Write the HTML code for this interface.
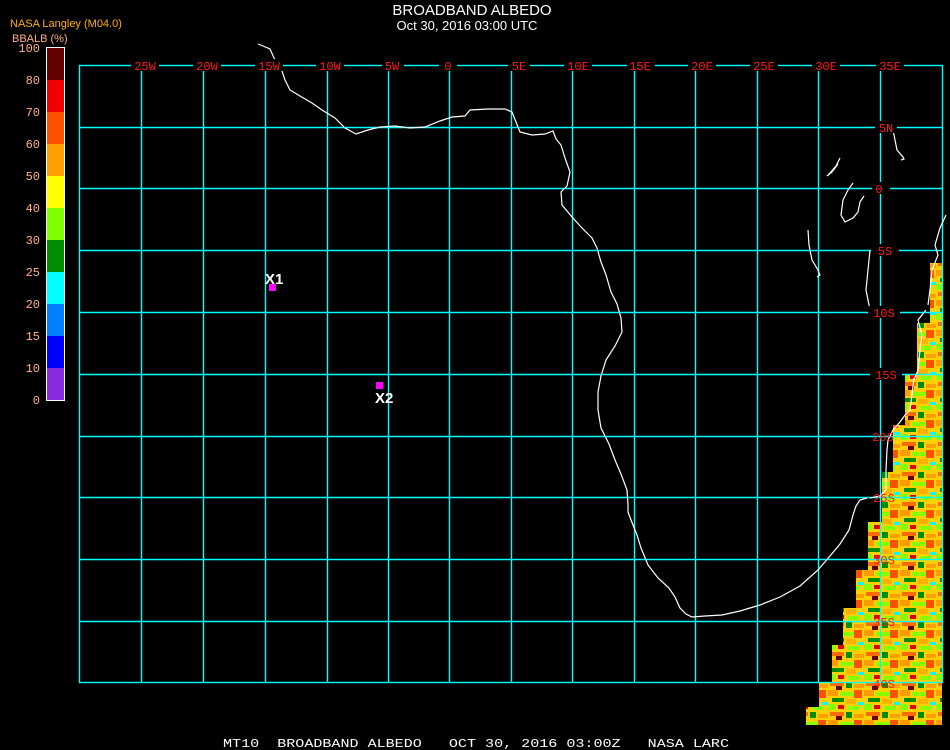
<!DOCTYPE html>
<html><head><meta charset="utf-8"><style>
html,body{margin:0;padding:0;background:#000;width:950px;height:750px;overflow:hidden}
svg{display:block}
text{font-family:"Liberation Mono",monospace}
</style></head><body>
<svg width="950" height="750" viewBox="0 0 950 750" xmlns="http://www.w3.org/2000/svg">
<defs>
<pattern id="dat" width="36" height="30" patternUnits="userSpaceOnUse">
<rect width="36" height="30" fill="#ffd000"/>
<rect x="0" y="0" width="10" height="6" fill="#ff9a00"/>
<rect x="12" y="2" width="14" height="4" fill="#88ff00"/>
<rect x="26" y="0" width="8" height="8" fill="#ff5000"/>
<rect x="4" y="8" width="12" height="4" fill="#008c00"/>
<rect x="18" y="9" width="10" height="5" fill="#ffb000"/>
<rect x="0" y="14" width="8" height="6" fill="#88ff00"/>
<rect x="10" y="15" width="6" height="4" fill="#e00000"/>
<rect x="20" y="16" width="12" height="4" fill="#88ff00"/>
<rect x="30" y="12" width="6" height="3" fill="#00ffff"/>
<rect x="2" y="22" width="14" height="4" fill="#ff6a00"/>
<rect x="18" y="22" width="6" height="6" fill="#008c00"/>
<rect x="26" y="24" width="10" height="4" fill="#ffa000"/>
<rect x="8" y="26" width="6" height="4" fill="#660000"/>
</pattern>
</defs>

<!-- data swath -->
<polygon shape-rendering="crispEdges" points="933,263 942,263 942,725 806,725 806,707 819,707 819,683 832,683 832,645 843,645 843,608 856,608 856,570 868,570 868,522 882,522 882,472 893,472 893,425 905,425 905,375 917,375 917,323 930,323 930,263" fill="url(#dat)"/>

<!-- grid -->
<g stroke="#00ffff" stroke-width="1.4" fill="none">
<rect x="79.5" y="65.5" width="863" height="617"/>
<path d="M141.5 65V682M203.5 65V682M265.5 65V682M327.5 65V682M388.5 65V682M449.5 65V682M511.5 65V682M572.5 65V682M634.5 65V682M695.5 65V682M757.5 65V682M818.5 65V682M880.5 65V682"/>
<path d="M79 127.5H942M79 188.5H942M79 250.5H942M79 312.5H942M79 374.5H942M79 436.5H942M79 497.5H942M79 559.5H942M79 621.5H942"/>
</g>

<!-- coastline -->
<g stroke="#fff" stroke-width="1.2" fill="none">
<polyline points="258,44 263,46 270,49 274,58 281,68 285,80 290,90 300,96 312,103 322,110 335,118 345,128 356,134 368,130 380,127 395,126 410,128 425,127 440,121 452,117 465,116 470,110 488,109 505,109 512,112 516,122 520,132 532,135 545,134 553,131 556,139 561,145 565,158 570,172 567,186 561,192 562,205 572,217 582,228 592,238 597,248 601,262 606,275 611,292 617,304 621,318 622,332 615,346 606,360 601,376 598,392 598,410 601,428 609,444 615,460 621,474 627,490 628,505 628,512 631,520 637,535 641,548 648,565 658,578 669,588 675,597 680,608 686,614 692,617 705,616 722,615 740,611 760,605 780,597 800,586 818,570 830,556 840,544 849,530 853,515 856,506 860,500 867,498"/>
<polyline points="870,498 880,496 886,490 886,470 887,450 888,440 893,430 900,422 905,415 910,410 912,395 914,378"/>
<polyline points="946,215 940,228 935,245 938,255 932,270 930,290 928,305"/>
<polyline points="914,380 918,370 920,350 922,335 918,320 926,310"/>
<polyline points="893,130 895,140 897,150 903,157 904,159 901,160"/>
<polyline points="840,158 836,166 829,174 827,176 832,172 838,164"/>
<polyline points="853,183 848,190 843,200 841,215 845,222 853,218 858,212 860,202 864,196"/>
<polyline points="808,230 809,245 812,260 818,270 820,275 817,277"/>
<polyline points="870,250 868,270 866,290 868,300 870,310"/>
</g>

<!-- top labels -->
<g font-size="12" fill="#ff1a1a" text-anchor="middle">
<rect x="131" y="59" width="28" height="12" fill="#000"/><text x="145" y="70">25W</text>
<rect x="193" y="59" width="28" height="12" fill="#000"/><text x="207" y="70">20W</text>
<rect x="255" y="59" width="28" height="12" fill="#000"/><text x="269" y="70">15W</text>
<rect x="316" y="59" width="28" height="12" fill="#000"/><text x="330" y="70">10W</text>
<rect x="382" y="59" width="22" height="12" fill="#000"/><text x="392" y="70">5W</text>
<rect x="439" y="59" width="18" height="12" fill="#000"/><text x="448" y="70">0</text>
<rect x="508" y="59" width="22" height="12" fill="#000"/><text x="519" y="70">5E</text>
<rect x="564" y="59" width="28" height="12" fill="#000"/><text x="578" y="70">10E</text>
<rect x="627" y="59" width="28" height="12" fill="#000"/><text x="640" y="70">15E</text>
<rect x="688" y="59" width="28" height="12" fill="#000"/><text x="702" y="70">20E</text>
<rect x="750" y="59" width="28" height="12" fill="#000"/><text x="764" y="70">25E</text>
<rect x="812" y="59" width="28" height="12" fill="#000"/><text x="826" y="70">30E</text>
<rect x="876" y="59" width="28" height="12" fill="#000"/><text x="890" y="70">35E</text>
</g>
<g font-size="12" fill="#ff1a1a" text-anchor="middle">
<rect x="875" y="121" width="22" height="12" fill="#000"/><text x="886" y="132">5N</text>
<rect x="872" y="182" width="18" height="12" fill="#000"/><text x="879" y="193">0</text>
<rect x="871" y="244" width="28" height="12" fill="#000"/><text x="885" y="255">5S</text>
<rect x="868" y="306" width="32" height="12" fill="#000"/><text x="884" y="317">10S</text>
<rect x="870" y="368" width="32" height="12" fill="#000"/><text x="886" y="379">15S</text>
<text x="883" y="441">20S</text>
<text x="884" y="502">25S</text>
<text x="884" y="564">30S</text>
<text x="884" y="626">35S</text>
<text x="884" y="688">40S</text>
</g>

<!-- markers -->
<rect x="269" y="284" width="7" height="7" fill="#ff00ff"/>
<text x="265" y="284" font-size="15" font-weight="bold" fill="#fff" style="font-family:'Liberation Sans',sans-serif">X1</text>
<rect x="376" y="382" width="7" height="7" fill="#ff00ff"/>
<text x="375" y="403" font-size="15" font-weight="bold" fill="#fff" style="font-family:'Liberation Sans',sans-serif">X2</text>

<!-- titles -->
<text x="472" y="15" font-size="15" fill="#fff" text-anchor="middle" style="font-family:'Liberation Sans',sans-serif">BROADBAND ALBEDO</text>
<text x="467" y="30" font-size="13" fill="#fff" text-anchor="middle" style="font-family:'Liberation Sans',sans-serif">Oct 30, 2016 03:00 UTC</text>

<!-- legend -->
<text x="10" y="27" font-size="11" fill="#ffb000" style="font-family:'Liberation Sans',sans-serif">NASA Langley (M04.0)</text>
<text x="12" y="42" font-size="11" fill="#ffb08a" style="font-family:'Liberation Sans',sans-serif">BBALB (%)</text>
<g shape-rendering="crispEdges">
<rect x="46" y="47" width="19" height="354" fill="#fff"/>
<rect x="47" y="48" width="17" height="32" fill="#640000"/>
<rect x="47" y="80" width="17" height="32" fill="#f00000"/>
<rect x="47" y="112" width="17" height="32" fill="#ff5000"/>
<rect x="47" y="144" width="17" height="32" fill="#ffa000"/>
<rect x="47" y="176" width="17" height="32" fill="#ffff00"/>
<rect x="47" y="208" width="17" height="32" fill="#80ff00"/>
<rect x="47" y="240" width="17" height="32" fill="#008c00"/>
<rect x="47" y="272" width="17" height="32" fill="#00ffff"/>
<rect x="47" y="304" width="17" height="32" fill="#0080ff"/>
<rect x="47" y="336" width="17" height="32" fill="#0000ff"/>
<rect x="47" y="368" width="17" height="32" fill="#8a2be2"/>
</g>
<g font-size="12" fill="#ffb08a" text-anchor="end" style="font-family:'Liberation Sans',sans-serif">
<text x="40" y="52">100</text><text x="40" y="84">80</text><text x="40" y="116">70</text><text x="40" y="148">60</text><text x="40" y="180">50</text><text x="40" y="212">40</text><text x="40" y="244">30</text><text x="40" y="276">25</text><text x="40" y="308">20</text><text x="40" y="340">15</text><text x="40" y="372">10</text><text x="40" y="404">0</text>
</g>

<!-- bottom -->
<text x="223" y="747" font-size="12" fill="#fff" textLength="506" lengthAdjust="spacingAndGlyphs" xml:space="preserve">MT10  BROADBAND ALBEDO   OCT 30, 2016 03:00Z   NASA LARC</text>
</svg>
</body></html>
